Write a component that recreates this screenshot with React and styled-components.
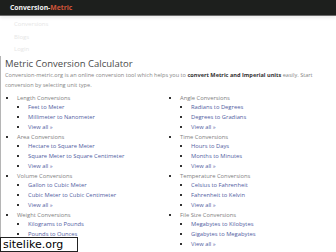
import React from "react";
import styled, { createGlobalStyle } from "styled-components";

const Global = createGlobalStyle`
  html, body { margin: 0; padding: 0; background: #fff; }
  body { font-family: "Open Sans", "Noto Sans", sans-serif; width: 336px; height: 252px; overflow: hidden; }
`;

const Page = styled.div`
  position: relative;
  width: 336px;
  height: 252px;
  overflow: hidden;
`;

const Header = styled.header`
  height: 15px;
  background: #1d1f1d;
  border-bottom: 1px solid #6a6a6a;
  box-shadow: 0 2px 3px rgba(0,0,0,0.08);
  display: flex;
  align-items: center;
  padding-left: 10px;
`;

const Brand = styled.span`
  font-size: 6.8px;
  font-weight: 700;
  color: #f2f2f2;
`;

const BrandAccent = styled.span`
  color: #d0553a;
`;

const Menu = styled.nav`
  display: flex;
  flex-direction: column;
  padding: 2px 0 0 14px;
`;

const MenuItem = styled.span`
  font-size: 6px;
  line-height: 12.5px;
  color: #e6e6e6;
`;

const Main = styled.main`
  border-left: 1px solid #b5b5b5;
  padding: 2px 0 0 4px;
`;

const Title = styled.h1`
  margin: 0;
  font-size: 9.5px;
  font-weight: 400;
  color: #4a4a4a;
  line-height: 12px;
`;

const Intro = styled.p`
  margin: 0;
  font-size: 5.6px;
  line-height: 10px;
  color: #858585;
  width: 318px;
  strong { color: #333; font-weight: 700; }
`;

const Columns = styled.div`
  display: grid;
  grid-template-columns: 163px 160px;
  margin-top: 4px;
`;

const List = styled.ul`
  margin: 0;
  padding: 0 0 0 ${p => p.$indent}px;
  list-style: square;
`;

const Item = styled.li`
  font-size: 5.8px;
  line-height: 9.75px;
  color: ${p => (p.$link ? "#52609f" : "#808080")};
  &::marker { color: #333; font-size: 6px; }
`;

const Watermark = styled.div`
  position: absolute;
  left: 0;
  bottom: 0;
  width: 74px;
  height: 13px;
  background: #fff;
  border: 1px solid #222;
  font-family: "DejaVu Sans", sans-serif;
  font-size: 11px;
  line-height: 13px;
  color: #000;
  padding-left: 2px;
`;

const groups = [
  [
    ["Length Conversions", ["Feet to Meter", "Millimeter to Nanometer"]],
    ["Area Conversions", ["Hectare to Square Meter", "Square Meter to Square Centimeter"]],
    ["Volume Conversions", ["Gallon to Cubic Meter", "Cubic Meter to Cubic Centimeter"]],
    ["Weight Conversions", ["Kilograms to Pounds", "Pounds to Ounces"]],
  ],
  [
    ["Angle Conversions", ["Radians to Degrees", "Degrees to Gradians"]],
    ["Time Conversions", ["Hours to Days", "Months to Minutes"]],
    ["Temperature Conversions", ["Celsius to Fahrenheit", "Fahrenheit to Kelvin"]],
    ["File Size Conversions", ["Megabytes to Kilobytes", "Gigabytes to Megabytes"]],
  ],
];

function Column({ data }) {
  return (
    <List $indent={12}>
      {data.map(([cat, links]) => (
        <Item key={cat}>
          {cat}
          <List $indent={11}>
            {links.map(l => (
              <Item $link key={l}>{l}</Item>
            ))}
            <Item $link>View all »</Item>
          </List>
        </Item>
      ))}
    </List>
  );
}

export default function App() {
  return (
    <Page>
      <Global />
      <Header>
        <Brand>
          Conversion-<BrandAccent>Metric</BrandAccent>
        </Brand>
      </Header>
      <Menu>
        <MenuItem>Conversions</MenuItem>
        <MenuItem>Blogs</MenuItem>
        <MenuItem>Login</MenuItem>
      </Menu>
      <Main>
        <Title>Metric Conversion Calculator</Title>
        <Intro>
          Conversion-metric.org is an online conversion tool which helps you to{" "}
          <strong>convert Metric and Imperial units</strong> easily. Start conversion by selecting unit type.
        </Intro>
        <Columns>
          <Column data={groups[0]} />
          <Column data={groups[1]} />
        </Columns>
      </Main>
      <Watermark>sitelike.org</Watermark>
    </Page>
  );
}
